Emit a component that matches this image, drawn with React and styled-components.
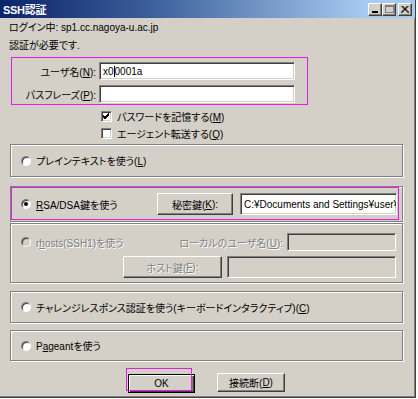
import React from "react";
import styled, { createGlobalStyle, css } from "styled-components";

const FACE = "#d4d0c8";

const Global = createGlobalStyle`
  html, body { margin: 0; padding: 0; background: #fff; }
  body {
    font-family: "Liberation Sans", "Noto Sans CJK JP", sans-serif;
    font-size: 10px;
    color: #000;
    font-feature-settings: "palt";
  }
  u { text-decoration: underline; text-underline-offset: 1px; }
`;

const raised = css`
  border: 1px solid;
  border-color: #fff #404040 #404040 #fff;
  box-shadow: inset -1px -1px 0 #808080, inset 1px 1px 0 ${FACE};
  background: ${FACE};
`;

const sunken = css`
  border: 1px solid;
  border-color: #808080 #fff #fff #808080;
  box-shadow: inset 1px 1px 0 #404040, inset -1px -1px 0 ${FACE};
`;

const Window = styled.div`
  width: 416px;
  height: 398px;
  box-sizing: border-box;
  background: ${FACE};
  border-right: 1px solid #404040;
  border-bottom: 1px solid #404040;
  box-shadow: inset -1px -1px 0 #808080;
  display: flex;
  flex-direction: column;
`;

const TitleBar = styled.div`
  height: 18px;
  flex: none;
  display: flex;
  align-items: center;
  justify-content: space-between;
  padding: 0 3px 0 3px;
  background: linear-gradient(to right, #0a246a 0%, #3a5c98 35%, #a6caf0 88%, #a6caf0 100%);
`;

const Title = styled.span`
  color: #fff;
  font-weight: bold;
  font-size: 11px;
  letter-spacing: -0.3px;
`;

const Controls = styled.div`
  display: flex;
  align-items: center;
`;

const CtlBtn = styled.div`
  ${raised};
  box-sizing: border-box;
  width: 14px;
  height: 13px;
  margin-left: ${(p) => (p.$gap ? 2 : 0)}px;
  display: flex;
  align-items: center;
  justify-content: center;
`;

const Body = styled.div`
  flex: 1;
  display: flex;
  flex-direction: column;
  padding-top: 1px;
`;

const InfoLine = styled.div`
  height: 18px;
  line-height: 18px;
  padding-left: 9px;
  white-space: nowrap;
`;

const CredBox = styled.div`
  margin: 2px 0 0 11px;
  width: 297px;
  box-sizing: border-box;
  border: 1px solid #e020e0;
  padding: 4px 11px 1px 0;
  display: flex;
  flex-direction: column;
  gap: 5px;
`;

const FieldRow = styled.div`
  display: flex;
  align-items: center;
`;

const FieldLabel = styled.label`
  width: 84px;
  margin-right: 3px;
  text-align: right;
  white-space: nowrap;
`;

const TextBox = styled.div`
  ${sunken};
  box-sizing: border-box;
  width: ${(p) => p.$w}px;
  height: ${(p) => p.$h || 18}px;
  margin-left: ${(p) => p.$ml || 0}px;
  background: ${(p) => (p.$disabled ? FACE : "#fff")};
  padding-left: 3px;
  display: flex;
  align-items: center;
  overflow: hidden;
  white-space: nowrap;
  flex: none;
`;

const Caret = styled.span`
  display: inline-block;
  width: 1px;
  height: 11px;
  background: #000;
`;

const Checks = styled.div`
  display: flex;
  flex-direction: column;
  padding: 3px 0 0 101px;
`;

const CheckRow = styled.div`
  height: 17px;
  display: flex;
  align-items: center;
  gap: 5px;
`;

const CheckBox = styled.div`
  ${sunken};
  box-sizing: border-box;
  width: 11px;
  height: 11px;
  background: #fff;
  display: flex;
  align-items: center;
  justify-content: center;
`;

const Group = styled.div`
  margin: ${(p) => p.$mt}px 0 0 10px;
  width: 393px;
  height: ${(p) => p.$h}px;
  box-sizing: border-box;
  border: 1px solid #808080;
  box-shadow: inset 1px 1px 0 #fff, 1px 1px 0 #fff;
  padding: ${(p) => p.$pad || "0 0 0 10px"};
  display: flex;
  flex-direction: column;
  justify-content: ${(p) => p.$justify || "center"};
  position: relative;
`;

const Highlight = styled.div`
  position: absolute;
  border: 1px solid #e020e0;
  pointer-events: none;
  ${(p) => p.$pos}
`;

const Row = styled.div`
  display: flex;
  align-items: center;
  height: ${(p) => p.$h || 17}px;
  margin-top: ${(p) => p.$mt || 0}px;
  padding-left: ${(p) => p.$pl || 0}px;
`;

const RadioLabel = styled.div`
  display: flex;
  align-items: center;
  gap: 5px;
  width: ${(p) => (p.$w ? `${p.$w}px` : "auto")};
  flex: none;
  color: ${(p) => (p.$disabled ? "#808080" : "#000")};
  text-shadow: ${(p) => (p.$disabled ? "1px 1px 0 #fff" : "none")};
  white-space: nowrap;
`;

const Radio = styled.div`
  width: 10px;
  height: 10px;
  box-sizing: border-box;
  border-radius: 50%;
  border: 1px solid;
  border-color: #808080 #fff #fff #808080;
  box-shadow: inset 1px 1px 0 #404040;
  background: ${(p) => (p.$disabled ? FACE : "#fff")};
  display: flex;
  align-items: center;
  justify-content: center;
  flex: none;
`;

const Dot = styled.div`
  width: 4px;
  height: 4px;
  border-radius: 50%;
  background: #000;
`;

const Button = styled.div`
  ${raised};
  box-sizing: border-box;
  width: ${(p) => p.$w}px;
  height: ${(p) => p.$h}px;
  margin-top: ${(p) => p.$mt || 0}px;
  display: flex;
  align-items: center;
  justify-content: center;
  white-space: nowrap;
  color: ${(p) => (p.$disabled ? "#808080" : "#000")};
  text-shadow: ${(p) => (p.$disabled ? "1px 1px 0 #fff" : "none")};
  flex: none;
  position: relative;
  ${(p) =>
    p.$default &&
    css`
      border: 1px solid #000;
      box-shadow: inset 1px 1px 0 #fff, inset -1px -1px 0 #404040, inset -2px -2px 0 #808080;
    `}
`;

const Label = styled.span`
  width: ${(p) => (p.$w ? `${p.$w}px` : "auto")};
  text-align: right;
  flex: none;
  white-space: nowrap;
  color: ${(p) => (p.$disabled ? "#808080" : "#000")};
  text-shadow: ${(p) => (p.$disabled ? "1px 1px 0 #fff" : "none")};
`;

const ButtonRow = styled.div`
  display: flex;
  justify-content: center;
  align-items: flex-start;
  gap: 22px;
  margin-top: 12px;
  padding-right: 2px;
`;

const CheckMark = () => (
  <svg width="7" height="7" viewBox="0 0 7 7">
    <path d="M0 3 L2 5 L6 1 M0 4 L2 6 L6 2 M0 2 L2 4 L6 0" stroke="#000" strokeWidth="1" fill="none" />
  </svg>
);

export default function App() {
  return (
    <>
      <Global />
      <Window>
        <TitleBar>
          <Title>SSH認証</Title>
          <Controls>
            <CtlBtn>
              <svg width="8" height="8" viewBox="0 0 8 8">
                <rect x="1" y="6" width="6" height="2" fill="#000" />
              </svg>
            </CtlBtn>
            <CtlBtn>
              <svg width="9" height="8" viewBox="0 0 9 8">
                <rect x="0.5" y="0.5" width="8" height="7" fill="none" stroke="#808080" />
                <rect x="0" y="0" width="9" height="2" fill="#808080" />
              </svg>
            </CtlBtn>
            <CtlBtn $gap>
              <svg width="8" height="7" viewBox="0 0 8 7">
                <path d="M0.5 0 L7.5 7 M7.5 0 L0.5 7 M1.5 0 L8.5 7 M6.5 0 L-0.5 7" stroke="#000" strokeWidth="1" />
              </svg>
            </CtlBtn>
          </Controls>
        </TitleBar>
        <Body>
          <InfoLine>ログイン中: sp1.cc.nagoya-u.ac.jp</InfoLine>
          <InfoLine>認証が必要です.</InfoLine>
          <CredBox>
            <FieldRow>
              <FieldLabel>
                ユーザ名(<u>N</u>):
              </FieldLabel>
              <TextBox $w={196}>
                x0
                <Caret />
                0001a
              </TextBox>
            </FieldRow>
            <FieldRow>
              <FieldLabel>
                パスフレーズ(<u>P</u>):
              </FieldLabel>
              <TextBox $w={196} />
            </FieldRow>
          </CredBox>
          <Checks>
            <CheckRow>
              <CheckBox>
                <CheckMark />
              </CheckBox>
              <span>
                パスワードを記憶する(<u>M</u>)
              </span>
            </CheckRow>
            <CheckRow>
              <CheckBox />
              <span>
                エージェント転送する(<u>Q</u>)
              </span>
            </CheckRow>
          </Checks>

          <Group $mt={2} $h={33}>
            <Row>
              <RadioLabel>
                <Radio />
                <span>
                  プレインテキストを使う(<u>L</u>)
                </span>
              </RadioLabel>
            </Row>
          </Group>

          <Group $mt={9} $h={36}>
            <Highlight $pos="left: 0; top: 0; right: 3px; bottom: 1px;" />
            <Row $h={22}>
              <RadioLabel $w={136}>
                <Radio>
                  <Dot />
                </Radio>
                <span>
                  <u>R</u>SA/DSA鍵を使う
                </span>
              </RadioLabel>
              <Button $w={76} $h={22}>
                秘密鍵(<u>K</u>):
              </Button>
              <TextBox $w={157} $h={22} $ml={7}>
                C:¥Documents and Settings¥user¥
              </TextBox>
            </Row>
          </Group>

          <Group $mt={1} $h={60} $justify="flex-start" $pad="8px 0 0 10px">
            <Row $h={20}>
              <RadioLabel $w={136} $disabled>
                <Radio $disabled />
                <span>
                  r<u>h</u>osts(SSH1)を使う
                </span>
              </RadioLabel>
              <Label $w={126} $disabled>
                ローカルのユーザ名(<u>U</u>):
              </Label>
              <TextBox $w={109} $h={18} $disabled $ml={4} />
            </Row>
            <Row $h={22} $mt={4} $pl={102}>
              <Button $w={99} $h={22} $disabled>
                ホスト鍵(<u>F</u>):
              </Button>
              <TextBox $w={169} $h={22} $disabled $ml={5} />
            </Row>
          </Group>

          <Group $mt={8} $h={32}>
            <Row>
              <RadioLabel>
                <Radio />
                <span>
                  チャレンジレスポンス認証を使う(キーボードインタラクティブ)(<u>C</u>)
                </span>
              </RadioLabel>
            </Row>
          </Group>

          <Group $mt={7} $h={31}>
            <Row>
              <RadioLabel>
                <Radio />
                <span>
                  P<u>a</u>geantを使う
                </span>
              </RadioLabel>
            </Row>
          </Group>

          <ButtonRow>
            <Button $w={67} $h={19} $default $mt={1}>
              OK
              <Highlight $pos="left: -3px; top: -7px; right: 2px; bottom: 1px;" />
            </Button>
            <Button $w={68} $h={19}>
              接続断(<u>D</u>)
            </Button>
          </ButtonRow>
        </Body>
      </Window>
    </>
  );
}
